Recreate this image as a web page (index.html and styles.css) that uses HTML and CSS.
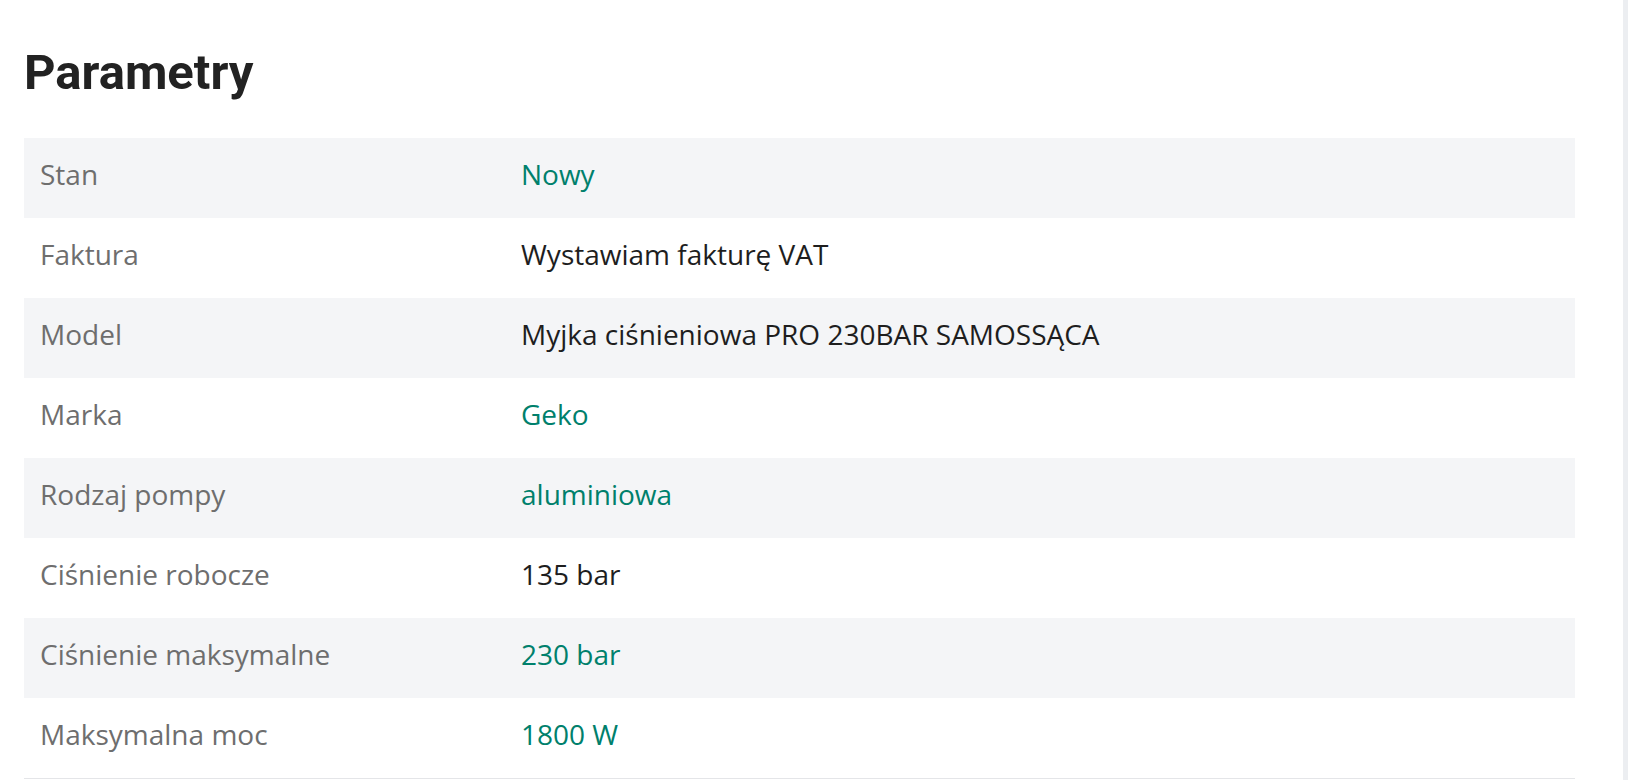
FILE: index.html
```html
<!DOCTYPE html>
<html lang="pl">
<head>
<meta charset="utf-8">
<title>Parametry</title>
<link rel="stylesheet" href="styles.css">
</head>
<body>
<main class="page">
  <section class="params">
    <h2 class="params-title">Parametry</h2>
    <div class="params-table">
      <div class="row"><div class="label">Stan</div><div class="value link">Nowy</div></div>
      <div class="row"><div class="label">Faktura</div><div class="value">Wystawiam fakturę VAT</div></div>
      <div class="row"><div class="label">Model</div><div class="value">Myjka ciśnieniowa PRO 230BAR SAMOSSĄCA</div></div>
      <div class="row"><div class="label">Marka</div><div class="value link">Geko</div></div>
      <div class="row"><div class="label">Rodzaj pompy</div><div class="value link">aluminiowa</div></div>
      <div class="row"><div class="label">Ciśnienie robocze</div><div class="value">135 bar</div></div>
      <div class="row"><div class="label">Ciśnienie maksymalne</div><div class="value link">230 bar</div></div>
      <div class="row"><div class="label">Maksymalna moc</div><div class="value link">1800 W</div></div>
    </div>
  </section>
</main>
</body>
</html>
```

FILE: styles.css
```css
html, body {
  margin: 0;
  padding: 0;
}
body {
  background: #eceef1;
  height: 780px;
  overflow: hidden;
}
.page {
  width: 1623px;
  height: 780px;
  background: #ffffff;
}
.params {
  padding: 0 48px 0 24px;
}
.params-title {
  margin: 0;
  padding-top: 43px;
  height: 138px;
  box-sizing: border-box;
  font-family: Roboto, "Liberation Sans", sans-serif;
  font-weight: 700;
  font-size: 49px;
  line-height: 60px;
  color: #222222;
}
.params-table {
  display: flex;
  flex-direction: column;
  border-bottom: 1px solid #e4e5e8;
}
.row {
  display: grid;
  grid-template-columns: 497px 1fr;
  height: 80px;
  box-sizing: border-box;
  padding-top: 17px;
  font-family: "Open Sans", "Liberation Sans", sans-serif;
  font-size: 28px;
  line-height: 38px;
}
.row:nth-child(odd) {
  background: #f4f5f7;
}
.label {
  padding-left: 16px;
  color: #6e6e6e;
}
.value {
  color: #1e1e1e;
}
.value.link {
  color: #00806c;
}
```
